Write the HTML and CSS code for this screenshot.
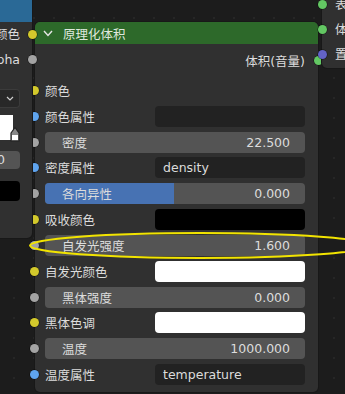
FILE: index.html
```html
<!DOCTYPE html>
<html lang="zh">
<head>
    <meta charset="UTF-8">
    <title>原理化体积</title>
    <link rel="stylesheet" href="styles.css">
</head>
<body>
<div class="canvas">

    <!-- главный узел -->
    <div class="node main-node">
        <div class="node-header">
            <svg class="chevron" width="10" height="7" viewBox="0 0 10 7"><polyline points="1,1 5,5.5 9,1" fill="none" stroke="#e6e6e6" stroke-width="1.4"/></svg>
            <span>原理化体积</span>
        </div>
        <div class="node-body">
            <div class="row output-row">
                <span>体积(音量)</span>
                <i class="socket out green"></i>
            </div>
            <div class="rows">
                <div class="row"><i class="socket yellow"></i><span>颜色</span></div>
                <div class="row"><i class="socket blue"></i><span>颜色属性</span><div class="field"></div></div>
                <div class="row"><i class="socket gray"></i><div class="slider"><span>密度</span><span>22.500</span></div></div>
                <div class="row"><i class="socket blue"></i><span>密度属性</span><div class="field">density</div></div>
                <div class="row"><i class="socket gray"></i><div class="slider"><b class="fill" style="width: 49.6%"></b><span>各向异性</span><span>0.000</span></div></div>
                <div class="row"><i class="socket yellow"></i><span>吸收颜色</span><div class="field black"></div></div>
                <div class="row"><i class="socket gray"></i><div class="slider"><span>自发光强度</span><span>1.600</span></div></div>
                <div class="row"><i class="socket yellow"></i><span>自发光颜色</span><div class="field white"></div></div>
                <div class="row"><i class="socket gray"></i><div class="slider"><span>黑体强度</span><span>0.000</span></div></div>
                <div class="row"><i class="socket yellow"></i><span>黑体色调</span><div class="field white"></div></div>
                <div class="row"><i class="socket gray"></i><div class="slider"><span>温度</span><span>1000.000</span></div></div>
                <div class="row"><i class="socket blue"></i><span>温度属性</span><div class="field">temperature</div></div>
            </div>
        </div>
    </div>

    <!-- левый узел (обрезан) -->
    <div class="node left-node">
        <div class="left-header"></div>
        <div class="left-out">颜色<i class="socket yellow"></i></div>
        <div class="left-out">Alpha<i class="socket gray"></i></div>
        <div class="left-select">
            <svg width="8" height="5" viewBox="0 0 8 5"><polyline points="1,1 4,4 7,1" fill="none" stroke="#cfcfcf" stroke-width="1.2"/></svg>
        </div>
        <div class="left-swatch">
            <svg class="picker" width="10" height="16" viewBox="0 0 10 16"><path d="M1,7 L5,1.5 L9,7 L9,15 L1,15 Z" fill="#888" stroke="#222" stroke-width="1.2"/><rect x="2" y="9" width="6" height="5" fill="#fff"/></svg>
        </div>
        <div class="left-number">0</div>
        <div class="left-black"></div>
    </div>

    <!-- правый узел (обрезан) -->
    <div class="node right-node">
        <div class="right-in"><i class="socket green"></i>表面</div>
        <div class="right-in"><i class="socket green"></i>体积</div>
        <div class="right-in"><i class="socket purple"></i>置换</div>
    </div>

    <!-- жёлтая пометка -->
    <svg class="mark" width="345" height="394" viewBox="0 0 345 394">
        <ellipse cx="200" cy="245.5" rx="170" ry="12.5" fill="none" stroke="#f2e400" stroke-width="2"/>
    </svg>
</div>
</body>
</html>
```
FILE: styles.css
```css
body {
    margin: 0;
    background-color: #1c1c1c;
    font-family: "DejaVu Sans", "Noto Sans CJK SC", sans-serif;
    font-size: 12.5px;
    color: #dcdcdc;
}
.canvas {
    position: relative;
    width: 345px;
    height: 394px;
    overflow: hidden;
    background-color: #1c1c1c;
    background-image: radial-gradient(circle, #262626 1px, transparent 1.3px);
    background-size: 20px 20px;
    background-position: 4px 8px;
}
.node {
    position: absolute;
    background-color: #303030;
    box-shadow: 0 0 0 1px #181818;
}
.socket {
    position: absolute;
    width: 9px;
    height: 9px;
    border-radius: 50%;
    box-shadow: 0 0 0 0.5px rgba(0, 0, 0, 0.6);
}
.yellow { background-color: #d3c92c; }
.gray { background-color: #a3a3a3; }
.blue { background-color: #5fa4ee; }
.green { background-color: #63c763; }
.purple { background-color: #6363c7; }

/* главный узел */
.main-node {
    left: 35px;
    top: 22px;
    width: 283px;
    height: 370px;
    border-radius: 5px;
}
.node-header {
    display: flex;
    align-items: center;
    gap: 10px;
    height: 22px;
    padding-left: 8px;
    background-color: #2d692a;
    border-radius: 5px 5px 0 0;
    color: #dfe8de;
}
.node-body {
    padding-top: 6px;
}
.row {
    position: relative;
    display: grid;
    grid-template-columns: 110px 1fr;
    align-items: center;
    height: 21px;
    padding: 0 13px 0 10px;
}
.row .socket {
    left: -5.5px;
    top: 6px;
}
.output-row {
    display: flex;
    justify-content: flex-end;
}
.output-row .socket {
    left: auto;
    right: -4.5px;
}
.rows {
    display: flex;
    flex-direction: column;
    gap: 4.83px;
    margin-top: 9px;
}
.field {
    height: 21px;
    line-height: 21px;
    padding-left: 8px;
    background-color: #222222;
    border-radius: 4px;
}
.field.black { background-color: #000; }
.field.white { background-color: #fff; }
.slider {
    position: relative;
    grid-column: 1 / 3;
    display: flex;
    justify-content: space-between;
    align-items: center;
    height: 21px;
    padding: 0 15px 0 17px;
    background-color: #545454;
    border-radius: 4px;
    overflow: hidden;
}
.slider span {
    position: relative;
}
.fill {
    position: absolute;
    left: 0;
    top: 0;
    bottom: 0;
    background-color: #4772b3;
}

/* левый узел */
.left-node {
    left: 0;
    top: 0;
    width: 32px;
    height: 238px;
    border-radius: 0 0 5px 0;
}
.left-header {
    height: 22px;
    background-color: #2a6996;
}
.left-out {
    position: relative;
    height: 25px;
    line-height: 25px;
    padding-right: 12px;
    text-align: right;
    white-space: nowrap;
    direction: rtl;
    overflow: visible;
}
.left-out .socket {
    right: -4.5px;
    top: 8px;
}
.left-node {
    overflow: visible;
}
.left-out:first-of-type {
    margin-top: 3px;
}
.left-select {
    display: flex;
    justify-content: flex-end;
    align-items: center;
    width: 20px;
    height: 19px;
    margin-top: 17px;
    padding-right: 5px;
    box-sizing: border-box;
    background-color: #282828;
    border: 1px solid #3b3b3b;
    border-left: none;
    border-radius: 0 4px 4px 0;
}
.left-swatch {
    position: relative;
    width: 13px;
    height: 25px;
    margin-top: 7px;
    background-color: #fff;
}
.picker {
    position: absolute;
    left: 10px;
    top: 11px;
}
.left-number {
    width: 20px;
    height: 18px;
    line-height: 18px;
    margin-top: 11px;
    text-indent: -3px;
    background-color: #545454;
    border-radius: 0 4px 4px 0;
}
.left-black {
    width: 20px;
    height: 20px;
    margin-top: 12px;
    background-color: #000;
    border-radius: 0 4px 4px 0;
}

/* правый узел */
.right-node {
    left: 322px;
    top: -8px;
    width: 40px;
    height: 76px;
    padding-top: 0;
    border-radius: 5px;
}
.right-in {
    position: relative;
    height: 25px;
    line-height: 25px;
    padding-left: 13px;
    white-space: nowrap;
}
.right-in .socket {
    left: -4.5px;
    top: 8px;
}

.mark {
    position: absolute;
    left: 0;
    top: 0;
}
```
